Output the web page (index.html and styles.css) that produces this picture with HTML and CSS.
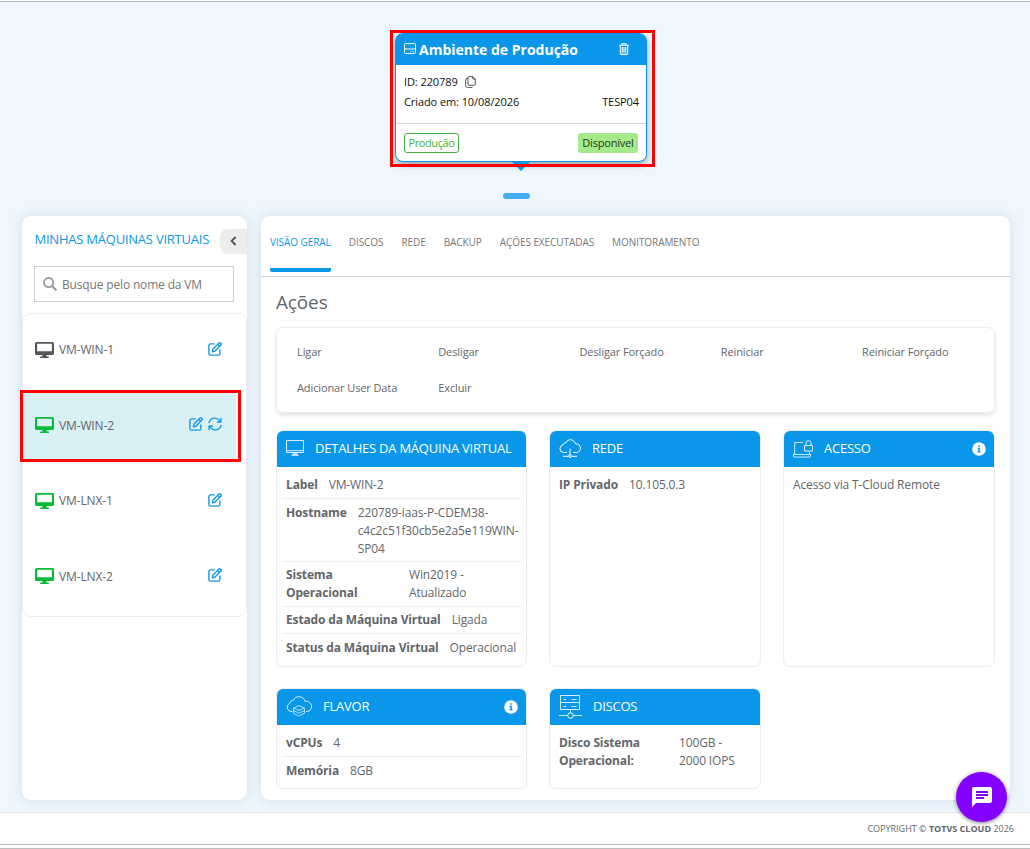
FILE: index.html
```html
<!DOCTYPE html>
<html lang="pt-BR">
<head>
<meta charset="utf-8">
<title>TOTVS Cloud</title>
<link rel="stylesheet" href="styles.css">
</head>
<body>
<svg width="0" height="0" class="defs">
  <symbol id="monitor" viewBox="0 0 18 16" preserveAspectRatio="none"><path fill="currentColor" fill-rule="evenodd" d="M1.500 0h15A1.500 1.500 0 0 1 18 1.500v10a1.500 1.500 0 0 1-1.500 1.500H11v1.400h1.500a.8.8 0 0 1 0 1.600h-7a.8.8 0 0 1 0-1.600H7V13H1.500A1.500 1.500 0 0 1 0 11.500v-10A1.500 1.500 0 0 1 1.500 0ZM2 1.700v7.500h14V1.700Z"/></symbol>
  <symbol id="edit" viewBox="0 0 14 14"><path fill="none" stroke="currentColor" stroke-width="1.400" stroke-linecap="round" stroke-linejoin="round" d="M6.200 1.900H2.600A1.700 1.700 0 0 0 .9 3.600v7.800a1.700 1.700 0 0 0 1.700 1.700h7.600a1.700 1.700 0 0 0 1.700-1.700V8M4.400 9.700l.5-2.500L11 1.100a1 1 0 0 1 1.400 0l.5.5a1 1 0 0 1 0 1.400L6.800 9.200ZM9.700 2.400l1.900 1.900"/></symbol>
  <symbol id="sync" viewBox="0 0 14 14"><path fill="none" stroke="currentColor" stroke-width="1.300" stroke-linecap="round" stroke-linejoin="round" d="M1 5.700A6 6 0 0 1 11.500 3.300L13 5M13 1.300V5H9.400M13 8.300A6 6 0 0 1 2.500 10.700L1 9M1 12.700V9h3.600"/></symbol>
  <symbol id="info" viewBox="0 0 14 14"><circle cx="7" cy="7" r="6.800" fill="#fff"/><path fill="#0a97ea" d="M6.100 3.200h1.700v1.600H6.100ZM5.500 5.800h2.400v3.600h.7v1.100H5.400V9.400h.8V6.900h-.7Z"/></symbol>
</svg>

<main class="stage">
  <div class="env-frame">
    <section class="env">
      <header class="env-head">
        <svg class="env-disk" viewBox="0 0 12 11"><path fill="none" stroke="#fff" d="M1.500.6h9a1 1 0 0 1 1 1v7.800a1 1 0 0 1-1 1h-9a1 1 0 0 1-1-1V1.600a1 1 0 0 1 1-1ZM.5 6h11"/><path stroke="#fff" d="M6.500 8.300h1M8.700 8.300h1"/></svg>
        <h1>Ambiente de Produção</h1>
        <svg class="env-trash" viewBox="0 0 10 12"><path fill="none" stroke="#fff" stroke-width="1.100" d="M0 2.200h10M3 2V.7h4V2M1.300 2.300v8a1.100 1.100 0 0 0 1.100 1.100h5.200a1.100 1.100 0 0 0 1.100-1.100v-8M3.300 4v5.800M5 4v5.800M6.700 4v5.800"/></svg>
      </header>
      <div class="env-body">
        <p>ID: 220789 <svg class="copy" viewBox="0 0 11 12"><path fill="none" stroke="#444" stroke-width=".9" d="M4 .6h4L10.300 3v5.300a1 1 0 0 1-1 1H4a1 1 0 0 1-1-1V1.600a1 1 0 0 1 1-1ZM7.800.6V3h2.500M3 2.500H2a1.300 1.300 0 0 0-1.300 1.300v5.800A1.800 1.800 0 0 0 2.500 11.400h5"/></svg></p>
        <p class="env-row"><span>Criado em: 10/08/2026</span><span>TESP04</span></p>
      </div>
      <footer class="env-foot"><span class="tag-outline">Produção</span><span class="tag-solid">Disponível</span></footer>
      <i class="env-arrow"></i>
    </section>
  </div>
  <i class="pager"></i>

  <div class="columns">
    <aside class="side">
      <div class="side-head"><h2>MINHAS MÁQUINAS VIRTUAIS</h2><button class="collapse"><svg width="7" height="10" viewBox="0 0 7 10"><path d="M5.600 1 1.600 5l4 4" fill="none" stroke="#555" stroke-width="1.900"/></svg></button></div>
      <label class="search"><svg width="14" height="14" viewBox="0 0 14 14"><circle cx="5.600" cy="5.600" r="4.600" fill="none" stroke="#999" stroke-width="1.800"/><path d="m9 9 4.400 4.400" stroke="#999" stroke-width="2"/></svg><span>Busque pelo nome da VM</span></label>
      <ul class="vms">
        <li class="vm off"><svg class="mon"><use href="#monitor"/></svg><span>VM-WIN-1</span><svg class="act"><use href="#edit"/></svg></li>
        <li class="vm selected"><svg class="mon"><use href="#monitor"/></svg><span>VM-WIN-2</span><svg class="act"><use href="#edit"/></svg><svg class="act"><use href="#sync"/></svg><i class="mark"></i></li>
        <li class="vm"><svg class="mon"><use href="#monitor"/></svg><span>VM-LNX-1</span><svg class="act"><use href="#edit"/></svg></li>
        <li class="vm"><svg class="mon"><use href="#monitor"/></svg><span>VM-LNX-2</span><svg class="act"><use href="#edit"/></svg></li>
      </ul>
    </aside>

    <section class="panel">
      <nav class="tabs"><a class="on">VISÃO GERAL</a><a>DISCOS</a><a>REDE</a><a>BACKUP</a><a>AÇÕES EXECUTADAS</a><a>MONITORAMENTO</a></nav>
      <div class="content">
        <h3>Ações</h3>
        <div class="actions"><span>Ligar</span><span>Desligar</span><span>Desligar Forçado</span><span>Reiniciar</span><span>Reiniciar Forçado</span><span>Adicionar User Data</span><span>Excluir</span></div>
        <div class="cards">
          <article class="card">
            <header><svg width="18" height="17" viewBox="0 0 18 17"><path fill="none" stroke="#d5eeff" d="M.5.500h17v12H.5ZM.5 10.700h17"/><path fill="#b9e1fb" d="M7 13h4l2 3H5Z"/></svg><h4 class="wide">DETALHES DA MÁQUINA VIRTUAL</h4></header>
            <dl>
              <div><dt>Label</dt><dd>VM-WIN-2</dd></div>
              <div class="low"><dt>Hostname</dt><dd>220789-iaas-P-CDEM38-<br>c4c2c51f30cb5e2a5e119WIN-<br>SP04</dd></div>
              <div><dt class="split">Sistema<br>Operacional</dt><dd>Win2019 -<br>Atualizado</dd></div>
              <div><dt>Estado da Máquina Virtual</dt><dd>Ligada</dd></div>
              <div class="low"><dt>Status da Máquina Virtual</dt><dd>Operacional</dd></div>
            </dl>
          </article>
          <article class="card">
            <header><svg width="22" height="19" viewBox="0 0 22 19"><path fill="none" stroke="#fff" d="M8 13.500H4.500A3.800 3.800 0 0 1 3.900 6C4 4.300 5.600 3.500 6.800 3.900 7.800 1.500 10 .5 12 .8c2.300.3 4 1.900 4.400 4 2.800-.1 5.100 1.700 5.100 4.300 0 2.400-1.700 4.400-4 4.400H14M11 9.500v6M4 17.300h5M13 17.300h5"/><circle cx="11" cy="17" r="1.400" fill="none" stroke="#fff"/></svg><h4>REDE</h4></header>
            <dl><div><dt>IP Privado</dt><dd>10.105.0.3</dd></div></dl>
          </article>
          <article class="card">
            <header><svg width="20" height="18" viewBox="0 0 20 18"><path fill="none" stroke="#d5eeff" d="M10 2.500H1.700V14M16.500 12v2M.5 14.500h17v1.600a1 1 0 0 1-1 1h-15a1 1 0 0 1-1-1ZM11.500 5.500h8V11h-8ZM13 5.500V3.200a2.500 2.500 0 0 1 5 0v2.300"/></svg><h4>ACESSO</h4><svg class="info"><use href="#info"/></svg></header>
            <dl><div><dd class="plain">Acesso via T-Cloud Remote</dd></div></dl>
          </article>
          <article class="card">
            <header><svg width="26" height="21" viewBox="0 0 26 21"><path fill="none" stroke="#d5eeff" d="M6.500 15.500H5A4.300 4.300 0 0 1 3.800 7.300C3.900 5.200 5.700 4.300 7.200 4.500 8.300 1.800 11 .500 13.600.700c2.800.2 5 2 5.400 4.600 3.600-.4 6.500 1.800 6.500 5.200 0 2.700-1.800 4.700-4.200 5H20"/><path fill="none" stroke="#d5eeff" stroke-width=".8" d="m7.500 12 5.500-2.400 5.500 2.400-5.500 2.400ZM7.500 12v5.300l5.500 2.700 5.500-2.700V12M7.500 14.600l5.500 2.500 5.500-2.500"/></svg><h4>FLAVOR</h4><svg class="info"><use href="#info"/></svg></header>
            <dl><div><dt>vCPUs</dt><dd>4</dd></div><div class="low"><dt>Memória</dt><dd>8GB</dd></div></dl>
          </article>
          <article class="card">
            <header><svg class="rack" width="23" height="24" viewBox="0 0 23 24"><path fill="none" stroke="#d5eeff" d="M1.500.5h19v7h-19ZM1.500 7.500h19v7h-19ZM11.500 14.500v3M0 20.500h8.500M14.500 20.500H23M4.500 4.500h2.500M12.500 4.500h5M4.500 11.500h2.500M12.500 11.500h5"/><circle cx="11.500" cy="20.500" r="2.800" fill="none" stroke="#fff"/></svg><h4>DISCOS</h4></header>
            <dl><div><dt class="disk">Disco Sistema<br>Operacional:</dt><dd>100GB -<br>2000 IOPS</dd></div></dl>
          </article>
        </div>
      </div>
    </section>
  </div>
</main>
<footer class="copyright"><span>COPYRIGHT © <b>TOTVS CLOUD</b> 2026</span></footer>
<button class="chat"><svg width="24" height="24" viewBox="0 0 24 24"><path fill="#fff" d="M20 2H4c-1.100 0-1.990.9-1.990 2L2 22l4-4h14c1.100 0 2-.9 2-2V4c0-1.100-.9-2-2-2ZM6 9h12v2H6V9Zm8 5H6v-2h8v2Zm4-6H6V6h12v2Z"/></svg></button>
</body>
</html>
```
FILE: styles.css
```css
* { box-sizing: border-box; }
body { margin: 0; width: 1030px; height: 849px; padding-top: 1px; overflow: hidden; background: #fff; font: 12px/18px "Open Sans", sans-serif; letter-spacing: -.14px; color: #63666a; }
h1, h2, h3, h4, p, ul, dl, dd { margin: 0; padding: 0; font-weight: 400; }
button { border: 0; padding: 0; }
svg { flex: none; }
.defs { position: absolute; }
.stage { height: 811px; border-top: 1px solid #b9bfc9; background: #eef7fe; padding-top: 28px; }

.env-frame { position: relative; width: 265px; height: 137px; margin-left: 390px; padding: 3px 0 0 5px; }
.env-frame::after { content: ""; position: absolute; inset: 0; border: 3px solid #fe0000; }
.env { position: relative; z-index: 0; width: 252px; height: 129px; display: flex; flex-direction: column; border: 1px solid #0a97ea; border-bottom-width: 1.500px; border-radius: 8px; background: #fff; box-shadow: 0 3px 6px rgba(0,0,0,.35); color: #111; font-size: 11px; letter-spacing: -.09px; }
.env-head { height: 31px; flex: none; display: flex; align-items: center; padding: 0 17px 0 8px; background: #0a97ea; border-radius: 6px 6px 0 0; color: #fff; }
.env-disk { width: 12px; height: 11px; margin: -2px 3px 0 0; }
.env-head h1 { font-size: 14px; font-weight: 700; letter-spacing: 0; white-space: nowrap; }
.env-trash { width: 10px; height: 12px; margin: -2px 0 0 auto; }
.env-body { height: 59px; padding: 7px 7px 0 8px; border-bottom: 1px solid #cfd3da; line-height: 20px; }
.copy { width: 11px; height: 12px; margin-left: 5px; vertical-align: -2px; }
.env-row { display: flex; justify-content: space-between; }
.env-foot { display: flex; justify-content: space-between; padding: 9px 8px 0; font-size: 11px; line-height: 17px; }
.tag-outline { height: 20px; width: 55px; text-align: center; border: 1px solid #43ad3c; border-radius: 3px; color: #43b13c; letter-spacing: -.4px; }
.tag-solid { height: 20px; width: 60px; text-align: center; border-radius: 3px; background: #a4ea8a; color: #1e3a1a; line-height: 19px; letter-spacing: -.2px; }
.env-arrow { position: absolute; left: 116px; top: 128px; border: 9px solid transparent; border-top-color: #0a97ea; border-bottom: 0; z-index: -1; }
.pager { display: block; width: 27px; height: 6px; margin: 26px 0 0 503px; border-radius: 3px; background: #43aeef; }

.columns { display: flex; gap: 14px; padding: 17px 20px 0 22px; }
.side, .panel { height: 584px; background: #fff; border-radius: 9px; box-shadow: 0 0 12px rgba(60,90,110,.16); }
.side { width: 225px; }
.panel { width: 749px; }
.side-head { display: flex; justify-content: space-between; align-items: center; height: 50px; padding: 0 0 0 12.500px; }
.side-head h2 { font-size: 13px; letter-spacing: -.23px; color: #0a97ea; white-space: nowrap; padding-bottom: 4px; }
.collapse { display: grid; place-items: center; width: 27px; height: 25px; background: #ededed; border-radius: 8px 0 0 8px; }
.search { display: flex; align-items: center; gap: 5px; width: 200px; height: 36px; margin-left: 12px; padding-left: 8px; border: 1px solid #cdcfd9; color: #777; letter-spacing: -.16px; }
.search span { padding-top: 2px; }
.vms { display: flex; flex-direction: column; gap: 8.600px; width: 225px; height: 304px; margin-top: 11px; padding-top: 2px; border: 1px solid #ededee; border-radius: 9px; list-style: none; }
.vm { position: relative; display: flex; align-items: center; gap: 5px; flex: none; width: 213px; height: 67px; padding: 0 14px 0 12px; color: #09bc37; }
.vm span { flex: 1; color: #63666a; }
.vm:nth-child(even) span { padding-top: 1.500px; }
.vm.off { color: #565756; }
.vm.selected { background: #d9f0f4; }
.mon { width: 19px; height: 16px; }
.act { width: 14px; height: 14px; margin-top: -2px; color: #1597e9; }
.mark { position: absolute; left: -3px; top: -2px; width: 221px; height: 72px; border: 3px solid #fe0000; }

.tabs { display: flex; gap: 18px; height: 61px; padding: 17px 9px 0; border-bottom: 1px solid #cdd0dc; font-size: 10px; letter-spacing: -.07px; color: #777; }
.tabs a { height: 39px; white-space: nowrap; }
.tabs .on { color: #0a97ea; height: 39px; border-bottom: 4px solid #0a97ea; border-radius: 2px; }
.content { padding: 12px 15px 0; }
.content h3 { font-size: 19px; line-height: 26px; }
.actions { display: grid; grid-template-columns: repeat(5, 141.250px); grid-auto-rows: 36px; align-items: center; height: 86px; margin-top: 12px; padding: 6px 0 0 20px; border: 1px solid #ededee; border-radius: 7px; box-shadow: 0 2px 4px rgba(0,0,0,.12); font-size: 11px; letter-spacing: -.11px; }
.cards { display: grid; grid-template-columns: 251px 212px 212px; grid-template-rows: 237px 101px; gap: 21px 22px; margin-top: 17px; }
.card { border: 1px solid #ededee; border-radius: 7px; overflow: hidden; }
.card header { display: flex; align-items: center; gap: 11px; height: 36px; padding: 0 8px 0 9px; background: #0a97ea; color: #fff; }
.card header > svg { margin-top: -1px; }
.card h4 { font-size: 13px; letter-spacing: -.23px; white-space: nowrap; padding-bottom: 2px; }
.card header > .info { width: 14px; height: 14px; margin-left: auto; }
.card dl { padding: 5px 4px 0 5px; }
.card dl div { display: flex; gap: 11px; padding: 4px; border-bottom: 1px solid #ededee; }
.card dl .low { padding: 5px 4px 3px; }
.card dl div:last-child { border: 0; }
.card dt { font-weight: 700; white-space: nowrap; }
.card dd { white-space: nowrap; }
.split { width: 112px; }
.disk { width: 109px; }

.copyright { display: flex; justify-content: flex-end; align-items: center; height: 33px; padding-right: 16px; border-top: 1px solid #dfe6ec; border-bottom: 1px solid #bdbdbd; font-size: 9px; letter-spacing: 0; }
.copyright::after { content: ""; position: absolute; left: 0; top: 848px; width: 100%; height: 1px; background: #bdbdbd; }
.chat { position: absolute; left: 956px; top: 772px; width: 51px; height: 50px; display: grid; place-items: center; border-radius: 50%; background: #8400ff; box-shadow: 0 1px 4px rgba(0,0,0,.5); }
```
